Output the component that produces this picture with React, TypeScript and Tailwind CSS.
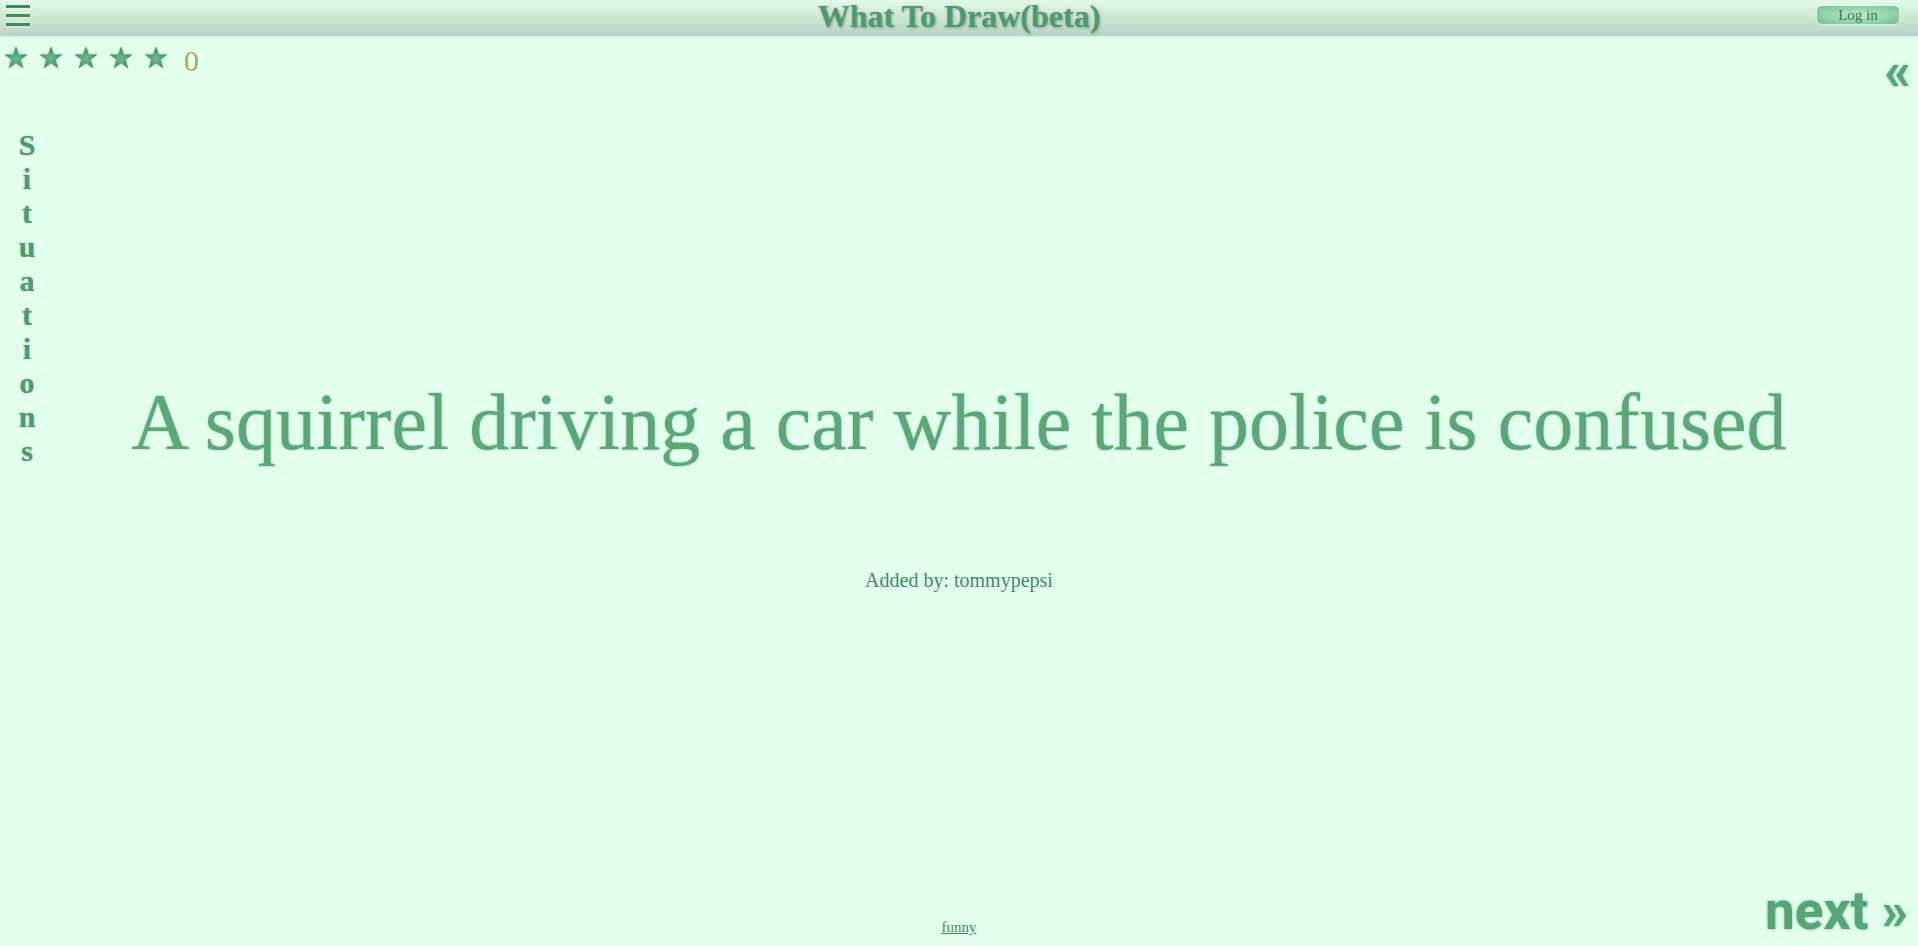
import { useState } from 'react'

const Star = () => (
  <svg width="24" height="23" viewBox="0 0 24 23" className="[filter:drop-shadow(0_0_1px_rgba(60,120,80,0.5))]">
    <defs>
      <radialGradient id="starFill" cx="50%" cy="55%" r="55%">
        <stop offset="0%" stopColor="#6dbb8c" />
        <stop offset="100%" stopColor="#3a865a" />
      </radialGradient>
    </defs>
    <path
      d="M12 0.5 L14.9 8.4 L23.5 8.5 L16.7 13.6 L19.2 22.3 L12 17.2 L4.8 22.3 L7.3 13.6 L0.5 8.5 L9.1 8.4 Z"
      fill="url(#starFill)"
    />
  </svg>
)

const Header = () => (
  <div className="grid h-9 grid-cols-3 bg-gradient-to-b from-[#e1f9e9] to-[#b7d3c3] shadow-[0_1px_2px_rgba(0,0,0,0.08)]">
    <div className="flex items-start">
      <svg width="26" height="30" viewBox="0 0 26 30" className="ml-[5px] [filter:drop-shadow(0_0_2px_rgba(255,255,255,0.8))]">
        <rect x="1" y="5" width="24" height="3" fill="#3f8a5e" />
        <rect x="1" y="14" width="24" height="3" fill="#3f8a5e" />
        <rect x="1" y="23" width="24" height="3" fill="#3f8a5e" />
      </svg>
    </div>
    <div className="flex justify-center">
      <h1 className="whitespace-nowrap text-[32px] font-bold leading-[32px] text-[#4d9a6b] [text-shadow:1px_1px_3px_rgba(60,80,70,0.45)]">
        What To Draw(beta)
      </h1>
    </div>
    <div className="flex items-start justify-end pr-[19px] pt-[6px]">
      <button className="flex h-[18px] w-[82px] items-center justify-center rounded-[5px] bg-[radial-gradient(ellipse_at_center,#b9ecc9_0%,#8fd2a9_60%,#6fbf8f_100%)] text-[15px] leading-none text-[#3b7354] shadow-[0_0_3px_rgba(255,255,255,0.9)]">
        Log in
      </button>
    </div>
  </div>
)

export default function App() {
  const [rating] = useState(0)
  const letters = 'Situations'.split('')

  return (
    <div className="relative flex min-h-[946px] flex-col bg-[#e3ffee] font-['Liberation_Serif',serif] leading-[normal]">
      <Header />

      <div className="flex items-start pl-[4px] pt-[8px]">
        <div className="mt-[2px] flex gap-[11px]">
          {[0, 1, 2, 3, 4].map((i) => (
            <Star key={i} />
          ))}
        </div>
        <span className="ml-[16px] text-[30px] text-[#b0aa55]">{rating}</span>
      </div>

      <p className="mt-[299px] whitespace-nowrap text-center text-[80px] text-[#5aa878] [text-shadow:0_0_2px_rgba(40,110,70,0.55)]">
        A squirrel driving a car while the police is confused
      </p>

      <p className="mt-[101px] text-center text-[20px] text-[#3f8a5e]">Added by: tommypepsi</p>

      <div className="flex-1" />

      <div className="grid grid-cols-3 items-end pb-[4px]">
        <div />
        <div className="mb-[6px] flex justify-center">
          <a href="#" className="text-[15px] text-[#3d8a5a] underline">
            funny
          </a>
        </div>
        <div className="flex justify-end pr-[10px]">
          <span className="font-['Roboto',sans-serif] text-[53px] font-bold text-[#54a676] [text-shadow:0_0_3px_rgba(40,110,70,0.5)]">
            next »
          </span>
        </div>
      </div>

      <div className="absolute left-[14px] top-[128px] flex w-[26px] flex-col items-center text-[30px] font-bold leading-[34px] text-[#4f9a6c] [text-shadow:0_0_2px_rgba(40,110,70,0.45)]">
        {letters.map((l, i) => (
          <span key={i}>{l}</span>
        ))}
      </div>

      <span className="absolute right-[7px] top-[40px] font-['Roboto',sans-serif] text-[53px] font-bold text-[#54a676] [text-shadow:0_0_3px_rgba(40,110,70,0.5)]">
        «
      </span>
    </div>
  )
}
